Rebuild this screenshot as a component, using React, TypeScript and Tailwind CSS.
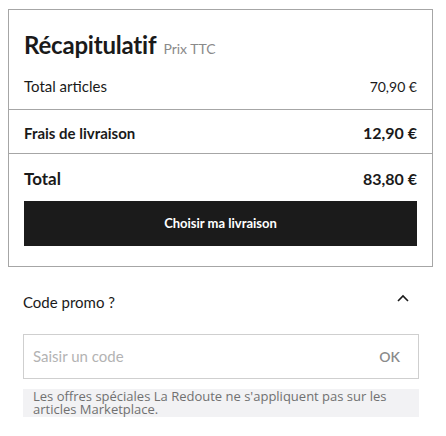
import React from "react";

export default function App() {
  const font = { fontFamily: "Lato, 'Noto Sans', sans-serif" };
  return (
    <div className="w-[446px] h-[436px] bg-white text-[#1a1a1a]" style={font}>
      <div className="pt-[9px] pl-[8px]">
        <div className="w-[425px] border border-[#a6a6a6]">
          <div className="px-[15px] pt-[20px]">
            <div className="flex items-baseline gap-[7px] h-[30px]">
              <span className="text-[24px] leading-[30px] font-bold tracking-[-0.2px]">Récapitulatif</span>
              <span className="text-[14px] text-[#8a8a8a]">Prix TTC</span>
            </div>
            <div className="flex justify-between items-center h-[24px] mt-[14px] mb-[11px] text-[15px]">
              <span>Total articles</span>
              <span className="text-[14px]">70,90 €</span>
            </div>
          </div>
          <div className="border-t border-[#a6a6a6] px-[15px] h-[44px] pt-[3px] flex justify-between items-center text-[15px] font-bold">
            <span>Frais de livraison</span>
            <span className="text-[16px]">12,90 €</span>
          </div>
          <div className="border-t border-[#a6a6a6] px-[15px] pb-[20px]">
            <div className="flex justify-between items-center h-[47px] pt-[3px] font-bold">
              <span className="text-[17px]">Total</span>
              <span className="text-[16px]">83,80 €</span>
            </div>
            <button className="w-full h-[45px] bg-[#1b1b1b] text-white text-[13px] font-bold flex items-center justify-center">
              Choisir ma livraison
            </button>
          </div>
        </div>
      </div>
      <div className="pl-[23px] w-[419px]">
        <div className="flex justify-between items-center h-[34px] mt-[18px]">
          <span className="text-[15px]">Code promo ?</span>
          <svg width="14" height="10" viewBox="0 0 14 10" className="mr-[9px] mb-[6px]">
            <path d="M2 7 L7 2 L12 7" fill="none" stroke="#1a1a1a" strokeWidth="1.6" />
          </svg>
        </div>
        <div className="mt-[15px] h-[45px] border border-[#cfcfcf] flex items-center justify-between px-[9px]">
          <span className="text-[15px] text-[#b3b3b3]">Saisir un code</span>
          <span className="text-[14px] text-[#8a8a8a] font-semibold mr-[9px]">OK</span>
        </div>
        <div
          className="mt-[10px] bg-[#f2f2f4] h-[28px] px-[10px] pt-[1px] text-[13px] leading-[12.7px] text-[#707070]"
          style={{ fontFamily: "'Open Sans', sans-serif" }}
        >
          Les offres spéciales La Redoute ne s'appliquent pas sur les articles Marketplace.
        </div>
      </div>
    </div>
  );
}
